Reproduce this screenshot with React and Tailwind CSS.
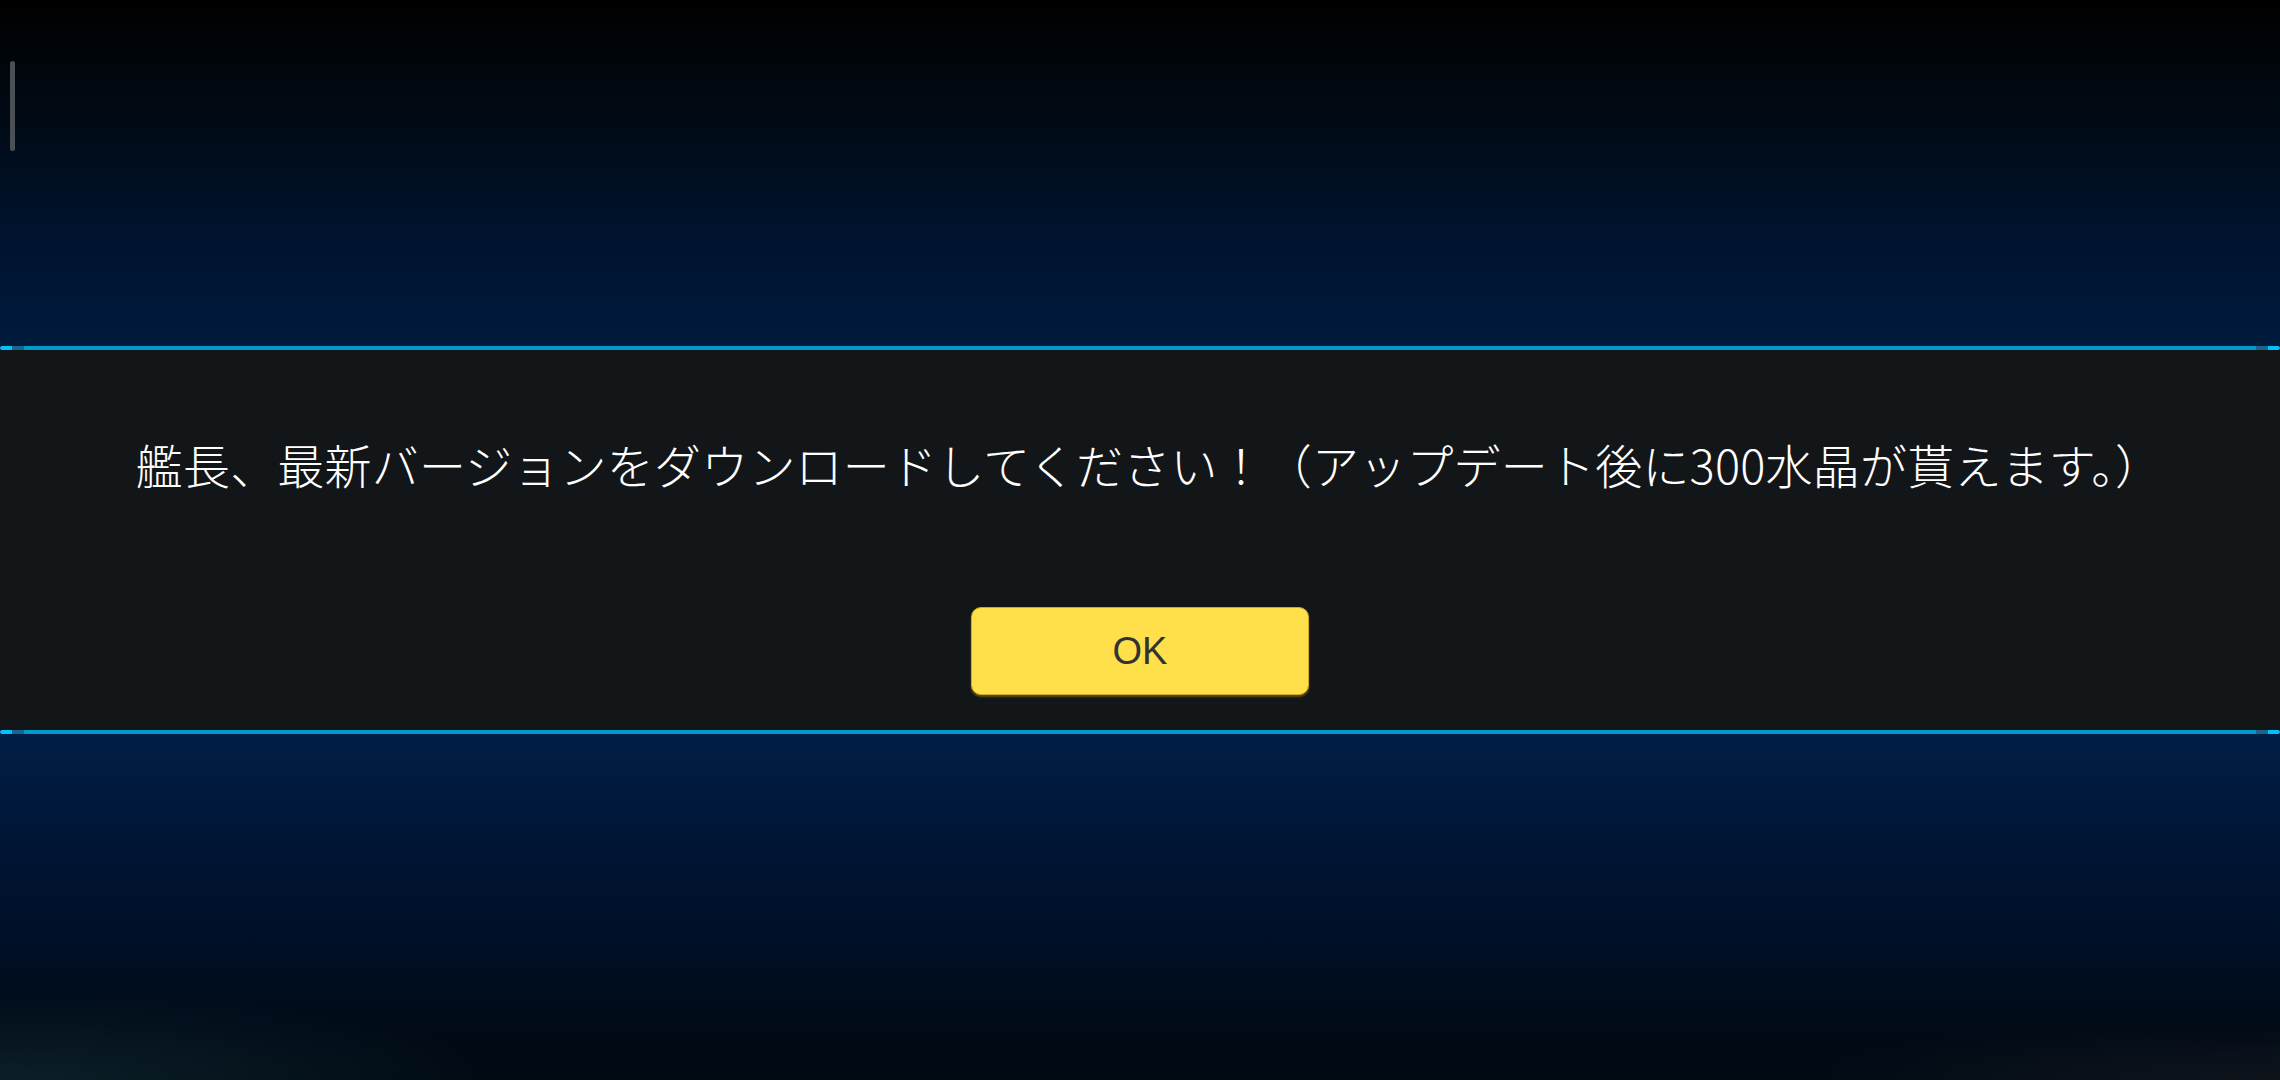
export default function App() {
  return (
    <div className="relative w-[2280px] h-[1080px] overflow-hidden flex flex-col bg-black">
      <div className="h-[346px] bg-[linear-gradient(to_bottom,#000000_0%,#010912_30%,#001330_70%,#001b3c_100%)]" />
      <div className="h-[4px] flex">
        <div className="w-[12px] bg-[#00c0ff] rounded-l-full" />
        <div className="w-[12px] bg-[#17668c]" />
        <div className="flex-1 bg-[#0399cb]" />
        <div className="w-[12px] bg-[#17668c]" />
        <div className="w-[12px] bg-[#00c0ff] rounded-r-full" />
      </div>
      <div className="h-[380px] bg-[#131619] flex flex-col items-center pt-[84px]">
        <p
          className="pl-[18px] text-[47px] leading-[60px] font-light text-white whitespace-nowrap tracking-[0.2px]"
          style={{ fontFamily: '"Noto Sans CJK JP", "Noto Sans", sans-serif' }}
        >
          艦長、最新バージョンをダウンロードしてください！（アップデート後に300水晶が貰えます。）
        </p>
        <button
          className="mt-[113px] w-[338px] h-[88px] rounded-[10px] bg-[#ffe04b] border border-[#c9aa2a] shadow-[0_2px_2px_rgba(110,85,0,0.9)] flex items-center justify-center text-[38px] text-[#333333]"
          style={{ fontFamily: '"Liberation Sans", Arial, sans-serif' }}
        >
          OK
        </button>
      </div>
      <div className="h-[4px] flex">
        <div className="w-[12px] bg-[#00c0ff] rounded-l-full" />
        <div className="w-[12px] bg-[#17668c]" />
        <div className="flex-1 bg-[#0399cb]" />
        <div className="w-[12px] bg-[#17668c]" />
        <div className="w-[12px] bg-[#00c0ff] rounded-r-full" />
      </div>
      <div className="relative flex-1 bg-[linear-gradient(to_bottom,#001e46_0%,#001636_30%,#000f26_60%,#000b17_85%,#000a13_100%)]">
        <div className="absolute left-0 bottom-0 w-[500px] h-[90px] bg-[radial-gradient(ellipse_at_bottom_left,rgba(20,45,55,0.6),rgba(0,0,0,0)_70%)]" />
        <div className="absolute right-0 bottom-0 w-[500px] h-[60px] bg-[radial-gradient(ellipse_at_bottom_right,rgba(30,30,35,0.5),rgba(0,0,0,0)_70%)]" />
      </div>
      <div className="absolute left-[10px] top-[61px] w-[5px] h-[90px] rounded-full bg-[#4b5056]" />
    </div>
  );
}
